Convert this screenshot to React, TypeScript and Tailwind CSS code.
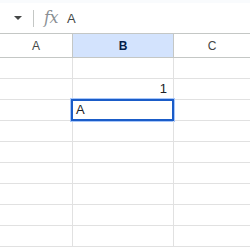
import React from 'react';

const rows = 9;

const App: React.FC = () => {
  return (
    <div className="w-[250px] h-[250px] overflow-hidden bg-white font-['Liberation_Sans',Arial,sans-serif]">
      {/* top strip */}
      <div className="h-[3px] bg-[#f9fbfd]" />

      {/* formula bar */}
      <div className="h-[31px] flex items-center border-b border-[#c4c7c5]">
        <div className="w-[33px] flex justify-center pl-[2px]">
          <svg width="8" height="4" viewBox="0 0 8 4">
            <path d="M0 0 L8 0 L4 4 Z" fill="#444746" />
          </svg>
        </div>
        <div className="w-px h-[17px] bg-[#c4c7c5]" />
        <span className="ml-[10px] font-['DejaVu_Serif',serif] italic text-[16px] leading-none text-[#8a8f94] tracking-[-0.5px]">
          fx
        </span>
        <span className="ml-[9px] text-[13px] leading-none text-[#444746]">A</span>
      </div>

      {/* column headers */}
      <div className="h-[24px] grid grid-cols-[73px_101px_1fr] border-b border-[#c4c7c5]">
        <div className="border-r border-[#c4c7c5] flex items-center justify-center text-[12px] text-[#444746]">A</div>
        <div className="border-r border-[#c4c7c5] bg-[#d3e3fd] flex items-center justify-center text-[12px] font-bold text-[#041e49]">B</div>
        <div className="flex items-center justify-center text-[12px] text-[#444746]">C</div>
      </div>

      {/* grid rows */}
      {Array.from({ length: rows }).map((_, i) => (
        <div key={i} className="h-[21px] grid grid-cols-[73px_101px_1fr] border-b border-[#e1e1e1]">
          <div className="border-r border-[#e1e1e1]" />
          <div className="relative border-r border-[#e1e1e1] flex items-center justify-end pr-[6px] text-[13px] text-[#202124]">
            {i === 1 && <span>1</span>}
            {i === 2 && (
              <div className="absolute left-[-2px] top-[-1px] w-[103px] h-[22px] border-2 border-[#1a5cc8] ring-1 ring-[#a8c7fa] bg-white flex items-center pl-[3px] text-[13px] text-[#202124]">
                A
              </div>
            )}
          </div>
          <div />
        </div>
      ))}
    </div>
  );
};

export default App;
